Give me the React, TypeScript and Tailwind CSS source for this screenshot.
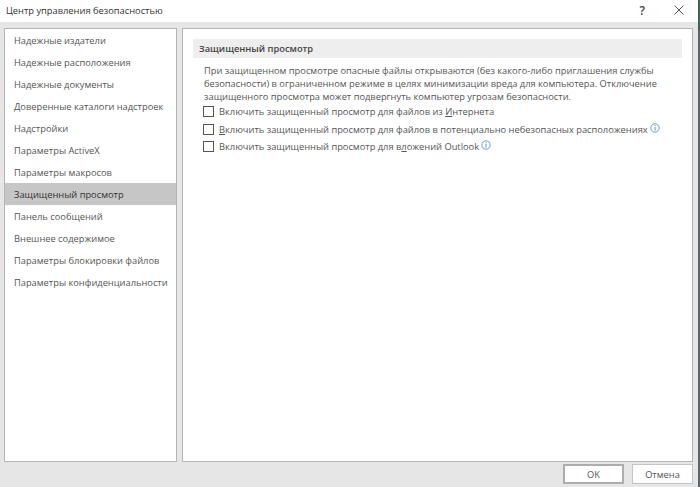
const items = [
  "Надежные издатели",
  "Надежные расположения",
  "Надежные документы",
  "Доверенные каталоги надстроек",
  "Надстройки",
  "Параметры ActiveX",
  "Параметры макросов",
  "Защищенный просмотр",
  "Панель сообщений",
  "Внешнее содержимое",
  "Параметры блокировки файлов",
  "Параметры конфиденциальности",
];

function InfoIcon() {
  return (
    <svg width="10" height="10" viewBox="0 0 10 10" className="shrink-0 text-[#4a86c8]">
      <circle cx="5" cy="5" r="4.2" fill="none" stroke="currentColor" strokeWidth="0.8" />
      <rect x="4.6" y="2.2" width="0.9" height="1" fill="currentColor" />
      <rect x="4.6" y="4" width="0.9" height="3.6" fill="currentColor" />
    </svg>
  );
}

function Option({ children, info }: { children: React.ReactNode; info?: boolean }) {
  return (
    <div className="flex h-[17.5px] items-center">
      <span className="h-[11px] w-[11px] shrink-0 border border-[#555] bg-white" />
      <span className="ml-[5px] whitespace-nowrap">{children}</span>
      {info && <span className="ml-[2px] -mt-[3px]"><InfoIcon /></span>}
    </div>
  );
}

export default function App() {
  return (
    <div className="flex h-[487px] w-[700px] overflow-hidden bg-white font-['Open_Sans','Noto_Sans',sans-serif] text-[9.3px] leading-[15px] text-[#555]">
      <div className="flex w-[698px] flex-col bg-[#e6e6e6]">
        <div className="flex h-[22px] items-center bg-white pb-[2px] pl-[6px] text-[#333]">
          <span>Центр управления безопасностью</span>
          <span className="ml-auto mr-[29px] text-[12px] font-semibold text-[#444]">?</span>
          <svg width="10" height="10" viewBox="0 0 10 10" className="mr-[14px] text-[#555]">
            <path d="M0.5 0.5L9.5 9.5M9.5 0.5L0.5 9.5" stroke="currentColor" strokeWidth="1" />
          </svg>
        </div>

        <div className="mt-[6px] ml-[4px] flex h-[434px] gap-[5px]">
          <div className="w-[173px] border border-[#b5b5b5] bg-white">
            {items.map((item, i) => (
              <div
                key={item}
                className={
                  i === 7
                    ? "flex h-[22px] items-center bg-[#c6c6c6] pl-[9px] whitespace-nowrap text-[#333]"
                    : "flex h-[22px] items-center pl-[9px] whitespace-nowrap"
                }
              >
                {item}
              </div>
            ))}
          </div>

          <div className="w-[511px] border border-[#b5b5b5] bg-white pt-[10px] pl-[10px]">
            <div className="flex h-[19px] w-[489px] items-center bg-[#eeeeee] pl-[6px] font-semibold text-[#444]">
              Защищенный просмотр
            </div>
            <div className="mt-[6px] ml-[10px]">
              <p className="pl-[1px] leading-[13px] whitespace-nowrap">
                При защищенном просмотре опасные файлы открываются (без какого-либо приглашения службы
                <br />
                безопасности) в ограниченном режиме в целях минимизации вреда для компьютера. Отключение
                <br />
                защищенного просмотра может подвергнуть компьютер угрозам безопасности.
              </p>
              <div>
                <Option>
                  Включить защищенный просмотр для файлов из <u>И</u>нтернета
                </Option>
                <Option info>
                  <u>В</u>ключить защищенный просмотр для файлов в потенциально небезопасных расположениях
                </Option>
                <Option info>
                  Включить защищенный просмотр для в<u>л</u>ожений Outlook
                </Option>
              </div>
            </div>
          </div>
        </div>

        <div className="mt-[2px] mr-[5px] flex justify-end gap-[8px]">
          <button className="flex h-[20px] w-[61px] items-center justify-center border-2 border-[#adadad] bg-white text-[#555]">
            OK
          </button>
          <button className="flex h-[20px] w-[61px] items-center justify-center border border-[#c4c4c4] bg-white text-[#555]">
            Отмена
          </button>
        </div>
      </div>
      <div className="flex w-[2px] flex-col bg-[#5f6466]">
        <div className="h-[30px] bg-[#2f6b52]" />
      </div>
    </div>
  );
}
